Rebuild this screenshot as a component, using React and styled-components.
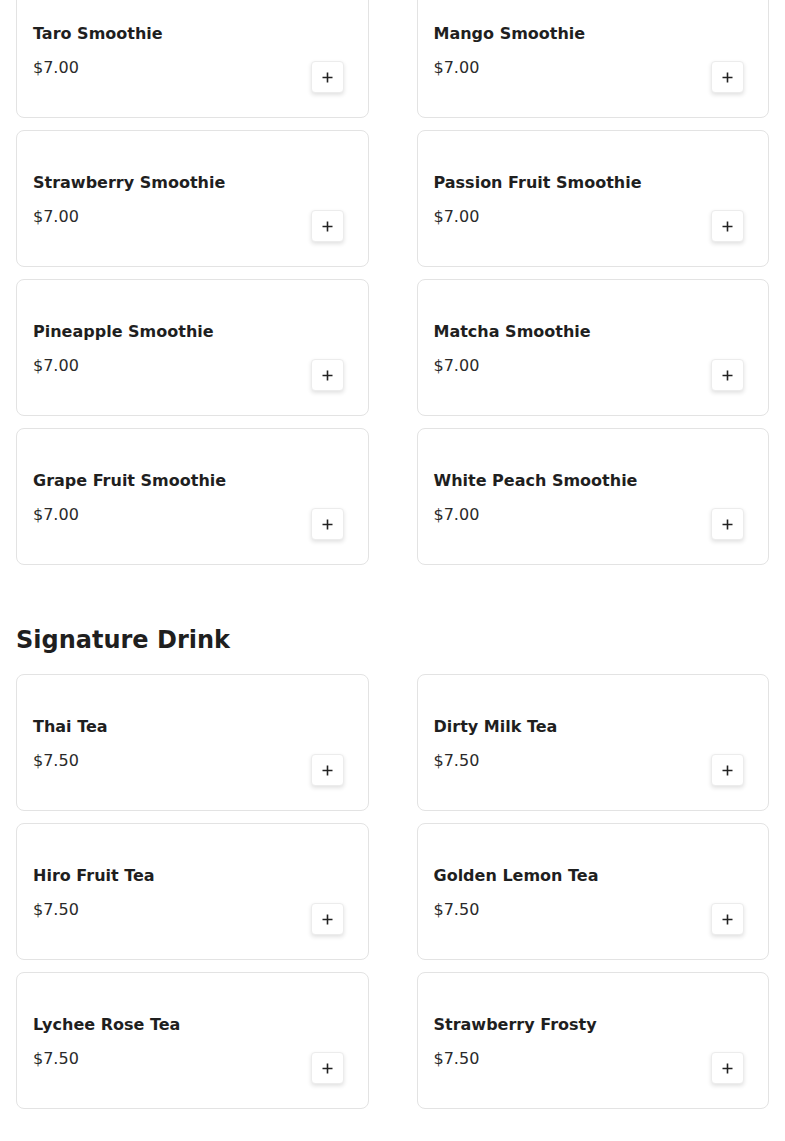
import React from "react";
import styled, { createGlobalStyle } from "styled-components";

const Global = createGlobalStyle`
  html, body { margin: 0; padding: 0; background: #fff; }
  body { font-family: "DejaVu Sans", sans-serif; color: #1a1a1a; }
  * { box-sizing: border-box; }
`;

const Page = styled.div`
  padding: 0 16px;
  overflow: hidden;
  height: 1141px;
`;

const Section = styled.section`
  display: flex;
  flex-direction: column;
`;

const Heading = styled.h2`
  margin: 59px 0 18px;
  font-size: 24px;
  line-height: 32px;
  font-weight: 700;
  color: #1f1f1f;
`;

const Grid = styled.div`
  display: grid;
  grid-template-columns: 1fr 1fr;
  column-gap: 48px;
  row-gap: 12px;
  margin-top: ${(p) => (p.$offset ? `${p.$offset}px` : "0")};
`;

const Card = styled.div`
  height: 137px;
  border: 1px solid #e3e3e3;
  border-radius: 8px;
  background: #fff;
  padding: 27px 24px 24px 16px;
  display: flex;
  align-items: center;
  justify-content: space-between;
`;

const Info = styled.div`
  display: flex;
  flex-direction: column;
  gap: 10px;
`;

const Name = styled.div`
  font-size: 16px;
  line-height: 24px;
  font-weight: 700;
  color: #1f1f1f;
`;

const Price = styled.div`
  font-size: 16px;
  line-height: 24px;
  color: #2a2a2a;
`;

const AddButton = styled.button`
  align-self: flex-end;
  width: 33px;
  height: 32px;
  padding: 0;
  border: 1px solid #ececec;
  border-radius: 4px;
  background: #fff;
  box-shadow: 0 2px 4px rgba(0, 0, 0, 0.12);
  display: flex;
  align-items: center;
  justify-content: center;
  color: #222;
  cursor: pointer;
`;

const PlusIcon = () => (
  <svg width="11" height="11" viewBox="0 0 11 11" fill="none">
    <path d="M5.5 0.5v10M0.5 5.5h10" stroke="currentColor" strokeWidth="1.6" />
  </svg>
);

const smoothies = [
  "Taro Smoothie",
  "Mango Smoothie",
  "Strawberry Smoothie",
  "Passion Fruit Smoothie",
  "Pineapple Smoothie",
  "Matcha Smoothie",
  "Grape Fruit Smoothie",
  "White Peach Smoothie",
];

const signature = [
  "Thai Tea",
  "Dirty Milk Tea",
  "Hiro Fruit Tea",
  "Golden Lemon Tea",
  "Lychee Rose Tea",
  "Strawberry Frosty",
];

const Item = ({ name, price }) => (
  <Card>
    <Info>
      <Name>{name}</Name>
      <Price>{price}</Price>
    </Info>
    <AddButton aria-label={`Add ${name}`}>
      <PlusIcon />
    </AddButton>
  </Card>
);

export default function App() {
  return (
    <>
      <Global />
      <Page>
        <Section>
          <Grid $offset={-19}>
            {smoothies.map((n) => (
              <Item key={n} name={n} price="$7.00" />
            ))}
          </Grid>
        </Section>
        <Section>
          <Heading>Signature Drink</Heading>
          <Grid>
            {signature.map((n) => (
              <Item key={n} name={n} price="$7.50" />
            ))}
          </Grid>
        </Section>
      </Page>
    </>
  );
}
